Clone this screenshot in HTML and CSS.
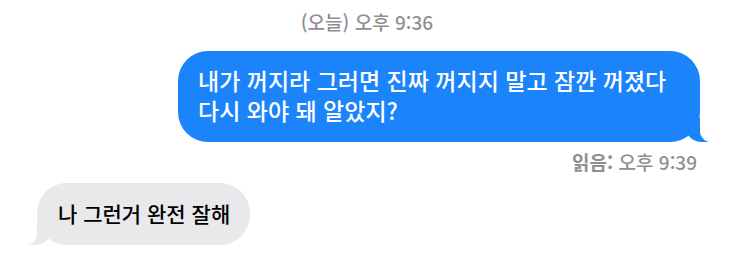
FILE: index.html
```html
<!DOCTYPE html>
<html lang="ko">
<head>
    <meta charset="UTF-8">
    <meta name="viewport" content="width=device-width, initial-scale=1.0">
    <title>메시지</title>
    <link rel="stylesheet" href="styles.css">
</head>
<body>
    <div class="thread">
        <div class="stamp">(오늘) 오후 9:36</div>

        <div class="row row-sent">
            <div class="bubble sent">
                <span class="line">내가 꺼지라 그러면 진짜 꺼지지 말고 잠깐 꺼졌다</span>
                <span class="line">다시 와야 돼 알았지?</span>
            </div>
        </div>

        <div class="receipt"><b>읽음:</b> 오후 9:39</div>

        <div class="row">
            <div class="bubble recv">나 그런거 완전 잘해</div>
        </div>
    </div>
</body>
</html>
```

FILE: styles.css
```css
body {
    margin: 0;
    background-color: #fff;
    font-family: "Noto Sans CJK KR", "Noto Sans", sans-serif;
}
.thread {
    width: 734px;
    height: 269px;
    overflow: hidden;
    display: flex;
    flex-direction: column;
}
.stamp {
    text-align: center;
    font-size: 19px;
    font-weight: 500;
    line-height: 22px;
    color: #8e8e93;
    padding-top: 11px;
}
.row {
    display: flex;
    padding: 0 37px;
}
.row-sent {
    justify-content: flex-end;
    margin-top: 18px;
    padding-right: 34px;
}
.bubble {
    position: relative;
    font-weight: 500;
    line-height: 29px;
    border-radius: 30px;
}
.sent {
    background-color: #1b84fb;
    color: #fff;
    font-size: 23px;
    width: 482px;
    padding: 15px 20px 17px 20px;
    display: flex;
    flex-direction: column;
}
.sent .line {
    display: block;
    height: 29.5px;
    line-height: 29.5px;
}
.sent::before {
    content: "";
    position: absolute;
    right: -8px;
    bottom: 0;
    width: 22px;
    height: 24px;
    background-color: #1b84fb;
    border-bottom-left-radius: 16px 14px;
}
.sent::after {
    content: "";
    position: absolute;
    right: -26px;
    bottom: 0;
    width: 26px;
    height: 26px;
    background-color: #fff;
    border-bottom-left-radius: 11px;
}
.receipt {
    text-align: right;
    font-size: 19px;
    font-weight: 500;
    line-height: 22px;
    color: #8e8e93;
    padding: 9px 37px 0 0;
}
.receipt b {
    font-weight: 700;
}
.row:last-child {
    margin-top: 10px;
}
.recv {
    background-color: #e9e9eb;
    color: #000;
    font-size: 21px;
    padding: 16px 20px 17px 21px;
}
.recv::before {
    content: "";
    position: absolute;
    left: -8px;
    bottom: 0;
    width: 22px;
    height: 24px;
    background-color: #e9e9eb;
    border-bottom-right-radius: 16px 14px;
}
.recv::after {
    content: "";
    position: absolute;
    left: -26px;
    bottom: 0;
    width: 26px;
    height: 26px;
    background-color: #fff;
    border-bottom-right-radius: 11px;
}
```
